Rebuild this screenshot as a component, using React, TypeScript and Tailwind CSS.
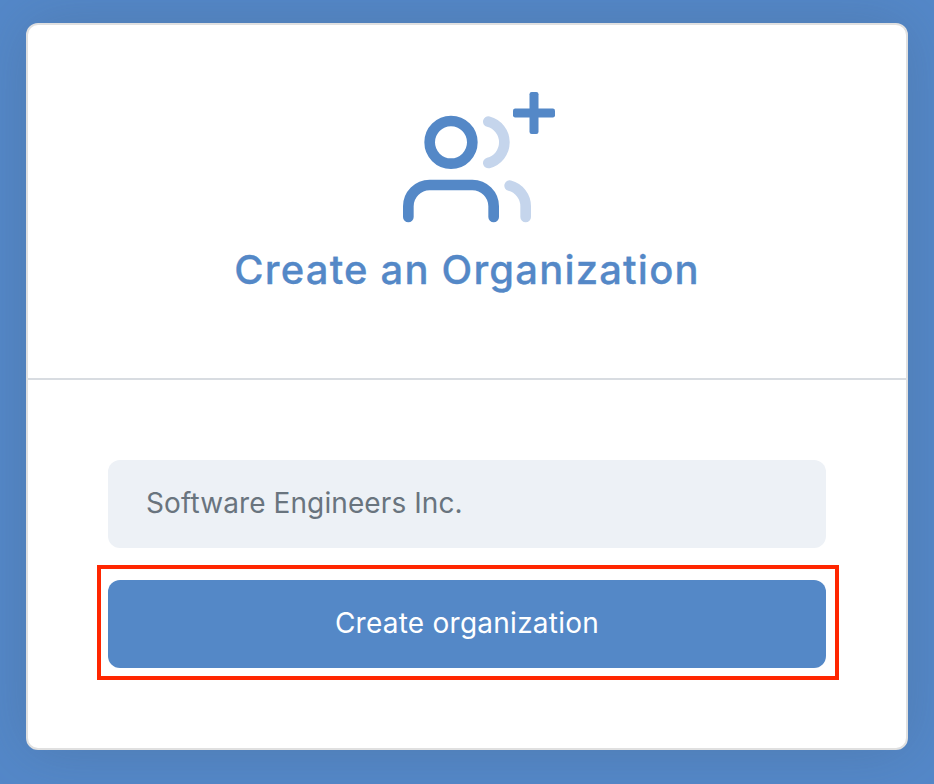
function OrganizationIcon() {
  return (
    <svg width="152" height="132" viewBox="403 92 152 132" fill="none" className="absolute left-[375px] top-[67px]" aria-hidden="true">
      <g transform="translate(403 105) scale(5.3333)" strokeWidth="2" strokeLinecap="round" strokeLinejoin="round">
        <path d="M17 21v-2a4 4 0 0 0-4-4H5a4 4 0 0 0-4 4v2" stroke="#5488c7" />
        <circle cx="9" cy="7" r="4" stroke="#5488c7" />
        <path d="M23 21v-2a4 4 0 0 0-3-3.87M16 3.13a4 4 0 0 1 0 7.75" stroke="#c5d5ec" />
      </g>
      <rect x="529.5" y="92" width="9" height="42" rx="2.2" fill="#5488c7" />
      <rect x="513" y="108.5" width="42" height="9" rx="2.2" fill="#5488c7" />
    </svg>
  );
}

export default function App() {
  return (
    <div className="h-[784px] w-[934px] overflow-hidden bg-[#5488c9] pl-[26px] pt-[23px] font-['Inter','Liberation_Sans',sans-serif]">
      <main className="h-[727px] w-[882px] rounded-[12px] border-2 border-[#e0e0e0] bg-white shadow-[0_0_60px_rgba(65,85,105,0.26)]">
        <header className="relative flex h-[355px] flex-col items-center border-b-2 border-[#d8dce1] pt-[217px]">
          <OrganizationIcon />
          <h1 className="whitespace-nowrap text-[40px] font-medium leading-[56px] tracking-[1.18px] text-[#5488c7] [-webkit-text-stroke:0.3px_#5488c7]">
            Create an Organization
          </h1>
        </header>
        <form className="px-20 pt-20" onSubmit={(event) => event.preventDefault()}>
          <input
            type="text"
            aria-label="Organization name"
            defaultValue="Software Engineers Inc."
            className="block h-[88px] w-full rounded-[12px] bg-[#edf1f6] px-[38px] pb-[2px] text-[28px] tracking-[0.1px] text-[#69747e] outline-none"
          />
          <div className="relative mt-8">
            <button type="submit" className="block h-[88px] w-full rounded-[12px] bg-[#5488c7] pb-[2px] text-[28px] tracking-[0.25px] text-white">
              Create organization
            </button>
            <div className="pointer-events-none absolute -left-[11px] -right-[13px] -top-[15px] -bottom-[12px] border-4 border-[#ff2600]" />
          </div>
        </form>
      </main>
    </div>
  );
}
